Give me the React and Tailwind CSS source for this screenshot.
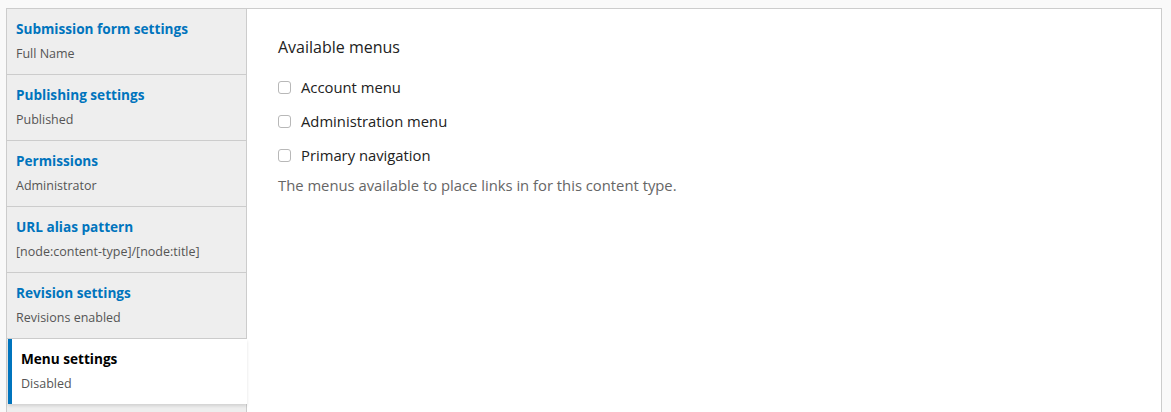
import React from 'react';

const tabs = [
  { title: 'Submission form settings', summary: 'Full Name' },
  { title: 'Publishing settings', summary: 'Published' },
  { title: 'Permissions', summary: 'Administrator' },
  { title: 'URL alias pattern', summary: '[node:content-type]/[node:title]' },
  { title: 'Revision settings', summary: 'Revisions enabled' },
  { title: 'Menu settings', summary: 'Disabled', active: true },
];

const menus = ['Account menu', 'Administration menu', 'Primary navigation'];

function Tab({ title, summary, active }) {
  if (active) {
    return (
      <li className="relative z-10 -mr-px ml-px border-l-4 border-[#0074bd] bg-white pt-[10px] pb-[11px] pl-[9px] shadow-[0_2px_3px_rgba(0,0,0,0.12)]">
        <div className="text-[13.6px] font-bold leading-[20px] text-black">{title}</div>
        <div className="mt-[6px] text-[12.5px] leading-[18px] text-[#555]">{summary}</div>
      </li>
    );
  }
  return (
    <li className="border-b border-[#ccc] pt-[10px] pb-[11px] pl-[9px]">
      <a href="#" className="block text-[13.6px] font-bold leading-[20px] text-[#0074bd]">{title}</a>
      <div className="mt-[6px] text-[12.5px] leading-[18px] text-[#555]">{summary}</div>
    </li>
  );
}

export default function App() {
  return (
    <div className="min-h-screen bg-[#f9f9f9] pt-[8px] pl-[6px] font-['Open_Sans',sans-serif]">
      <div className="flex h-[420px] w-[1156px] border border-[#ccc] bg-white">
        {/* vertical tabs */}
        <ul className="w-[240px] shrink-0 border-r border-[#ccc] bg-[#eee]">
          {tabs.map(t => (
            <Tab key={t.title} {...t} />
          ))}
        </ul>

        {/* details pane */}
        <div className="flex-1 pt-[28px] pl-[31px]">
          <h3 className="text-[16px] leading-[20px] text-[#222]">Available menus</h3>
          <div className="mt-[20px] flex flex-col gap-[14px]">
            {menus.map(m => (
              <label key={m} className="flex items-center text-[14.8px] leading-[20px] text-[#222]">
                <span className="mr-[10px] h-[13px] w-[13px] rounded-[3px] border border-[#b8b8b8] bg-white" />
                {m}
              </label>
            ))}
          </div>
          <p className="mt-[10px] text-[14.8px] leading-[20px] text-[#666]">
            The menus available to place links in for this content type.
          </p>
        </div>
      </div>
    </div>
  );
}
